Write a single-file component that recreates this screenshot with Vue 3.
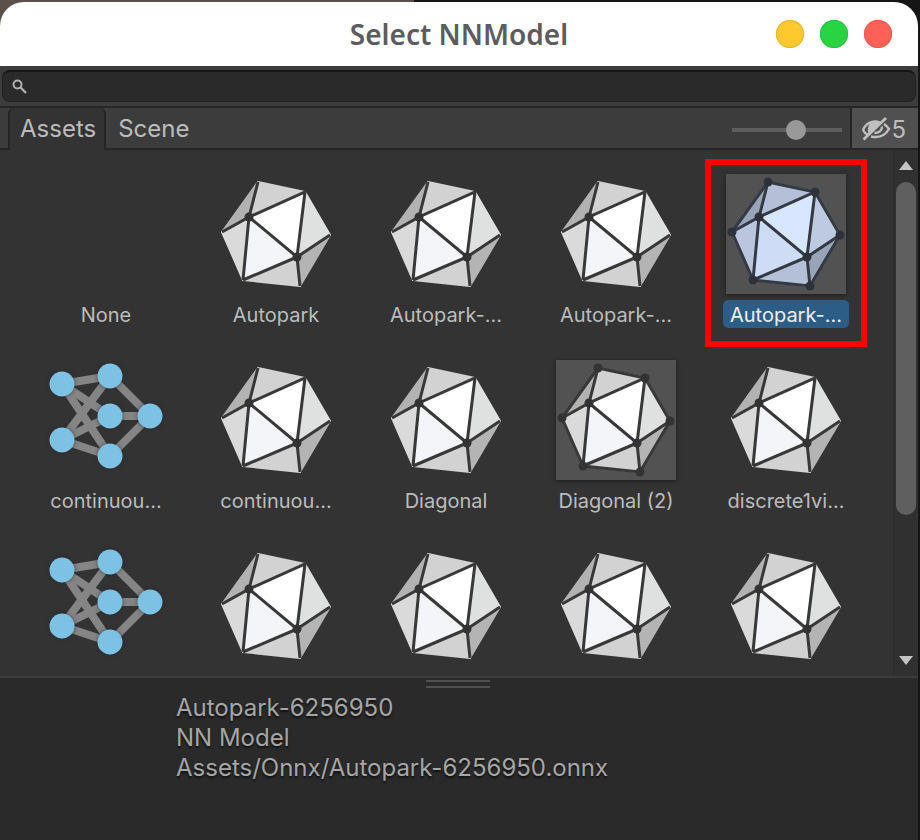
<script setup>
import { ref } from 'vue'

const search = ref('')
const zoom = ref(60)
const activeTab = ref('Assets')
const tabs = ['Assets', 'Scene']

const items = ref([
  { label: 'None', kind: 'none' },
  { label: 'Autopark', kind: 'mesh' },
  { label: 'Autopark-...', kind: 'mesh' },
  { label: 'Autopark-...', kind: 'mesh' },
  { label: 'Autopark-...', kind: 'mesh', tile: true, marked: true },
  { label: 'continuou...', kind: 'net' },
  { label: 'continuou...', kind: 'mesh' },
  { label: 'Diagonal', kind: 'mesh' },
  { label: 'Diagonal (2)', kind: 'mesh', tile: true },
  { label: 'discrete1vi...', kind: 'mesh' },
  { label: '', kind: 'net' },
  { label: '', kind: 'mesh' },
  { label: '', kind: 'mesh' },
  { label: '', kind: 'mesh' },
  { label: '', kind: 'mesh' }
])
const selected = ref(4)

// Icosahedron faces: points, neutral fill, selected fill
const faces = [
  ['42,8 89,18 33,43', '#d2d2d2', '#b3c0d8'],
  ['42,8 33,43 6,58', '#b2b2b2', '#99a4b8'],
  ['33,43 6,58 27,106', '#dadada', '#b9c6de'],
  ['33,43 89,18 81,83', '#ffffff', '#d9e6ff'],
  ['33,43 81,83 27,106', '#f4f5f8', '#cfdcf6'],
  ['89,18 114,61 81,83', '#dfe1e0', '#bdcae2'],
  ['81,83 114,61 84,112', '#b4b4b4', '#99a4b8'],
  ['81,83 84,112 27,106', '#d2d2d2', '#b3c0d8']
]
const outline = '42,8 89,18 114,61 84,112 27,106 6,58'
const innerEdges = 'M42 8 L33 43 L6 58 M27 106 L33 43 L89 18 L81 83 L114 61 M84 112 L81 83 L27 106 M33 43 L81 83'
const vertices = [[42, 8], [89, 18], [33, 43], [6, 58], [27, 106], [84, 112], [81, 83], [114, 61]]
const innerVertices = [[33, 43], [81, 83]]

const nodes = [[16, 24], [64, 16], [64, 56], [104, 56], [16, 80], [64, 96]]
const links = [[0, 5], [4, 1], [0, 1], [0, 2], [4, 2], [4, 5], [1, 3], [2, 3], [5, 3]]

function faceColor(face, i) {
  return selected.value === i ? face[2] : face[1]
}
</script>

<template>
  <div class="desktop">
    <main class="window">
      <header class="titlebar">
        <h1>Select NNModel</h1>
        <div class="controls">
          <button class="dot yellow" aria-label="Minimize"></button>
          <button class="dot green" aria-label="Maximize"></button>
          <button class="dot red" aria-label="Close"></button>
        </div>
      </header>

      <div class="searchbar">
        <label class="search">
          <svg viewBox="0 0 16 16" width="16" height="16" fill="none" stroke="#b0b0b0" aria-hidden="true">
            <circle cx="5.500" cy="5.500" r="4" stroke-width="2" />
            <path d="M8.500 8.500 L14 14" stroke-width="2.400" />
          </svg>
          <input v-model="search" type="text" aria-label="Search" />
        </label>
      </div>

      <nav class="toolbar">
        <button
          v-for="t in tabs"
          :key="t"
          class="tab"
          :class="{ active: activeTab === t }"
          @click="activeTab = t"
        >{{ t }}</button>
        <input v-model="zoom" class="slider" type="range" min="0" max="100" aria-label="Icon size" />
        <button class="hidden-count" aria-label="Hidden packages">
          <svg viewBox="0 0 30 26" width="30" height="26" fill="none" stroke="#c0c0c0" stroke-width="2.400" aria-hidden="true">
            <path d="M2 14 C6 5 14 4.500 19 6.500 M2 14 C3.500 17 4.500 18 7 19 M23 8 C26 10 27 11.500 28 13 C24 20 17 22 10 20.500" />
            <path d="M19.500 6 L8 18.500 C5.500 14 7 6 13 5.500 Z" fill="#c0c0c0" stroke="none" />
            <path d="M21 10.500 C21.500 14 18 17 13.500 17" />
            <path d="M2.500 23.500 L25 2" stroke-width="2.800" />
          </svg>
          <span>5</span>
        </button>
      </nav>

      <section class="browser">
        <div class="grid">
          <button
            v-for="(item, i) in items"
            :key="i"
            class="item"
            :class="{ selected: selected === i }"
            @click="selected = i"
          >
            <span class="thumb" :class="{ tile: item.tile }">
              <svg v-if="item.kind === 'mesh'" viewBox="0 0 120 120" class="mesh" aria-hidden="true">
                <polygon
                  v-for="f in faces"
                  :key="f[0]"
                  :points="f[0]"
                  :fill="faceColor(f, i)"
                  :stroke="faceColor(f, i)"
                  stroke-width="2"
                  stroke-linejoin="round"
                />
                <path :d="innerEdges" class="edge" />
                <polygon v-if="item.tile" :points="outline" class="edge" />
                <circle
                  v-for="v in item.tile ? vertices : innerVertices"
                  :key="v[0]"
                  :cx="v[0]"
                  :cy="v[1]"
                  r="4.500"
                />
              </svg>
              <svg v-else-if="item.kind === 'net'" viewBox="0 0 120 120" class="net" aria-hidden="true">
                <line
                  v-for="(l, n) in links"
                  :key="'l' + n"
                  :x1="nodes[l[0]][0]"
                  :y1="nodes[l[0]][1]"
                  :x2="nodes[l[1]][0]"
                  :y2="nodes[l[1]][1]"
                />
                <circle v-for="(n, k) in nodes" :key="'n' + k" :cx="n[0]" :cy="n[1]" r="12.500" />
              </svg>
            </span>
            <span class="label">{{ item.label }}</span>
            <span v-if="item.marked" class="marker"></span>
          </button>
        </div>
        <div class="scrollbar">
          <button class="arrow" aria-label="Scroll up">
            <svg viewBox="0 0 16 10" width="16" height="10"><path d="M8 0 L15 9 H1 Z" fill="#c4c4c4" /></svg>
          </button>
          <div class="track"><div class="handle"></div></div>
          <button class="arrow" aria-label="Scroll down">
            <svg viewBox="0 0 16 10" width="16" height="10"><path d="M8 10 L15 1 H1 Z" fill="#c4c4c4" /></svg>
          </button>
        </div>
      </section>

      <footer class="details">
        <div class="grip"></div>
        <p>Autopark-6256950</p>
        <p>NN Model</p>
        <p>Assets/Onnx/Autopark-6256950.onnx</p>
      </footer>
    </main>
  </div>
</template>

<style>
body {
  background: #151515;
}
</style>

<style scoped>
.desktop {
  box-sizing: border-box;
  height: 100vh;
  padding: 2px 2px 0 0;
  background: linear-gradient(90deg, #5a514b 0 45%, #151515 45%);
  font-family: Inter, "Liberation Sans", sans-serif;
}
.window {
  display: flex;
  flex-direction: column;
  height: 100%;
  overflow: hidden;
  border-radius: 24px 24px 0 0;
  background: #3c3c3c;
  color: #bcbcbc;
}
button {
  margin: 0;
  padding: 0;
  border: 0;
  background: none;
  color: inherit;
  font: inherit;
}
.titlebar {
  display: grid;
  grid-template-columns: 1fr auto 1fr;
  align-items: center;
  height: 64px;
  flex: none;
  background: #fff;
}
h1 {
  grid-column: 2;
  margin: 0;
  color: #5c5c60;
  font: 600 28px/64px "Noto Sans", "Open Sans", sans-serif;
}
.controls {
  display: flex;
  justify-content: flex-end;
  gap: 16px;
  padding-right: 26px;
}
.dot {
  width: 28px;
  height: 28px;
  border-radius: 50%;
}
.yellow { background: #fdc92f; box-shadow: inset 0 0 0 1px #e3b52f; }
.green { background: #28d441; box-shadow: inset 0 0 0 1px #27c23d; }
.red { background: #ff6157; box-shadow: inset 0 0 0 1px #ec5b52; }
.searchbar {
  flex: none;
  padding: 4px 2px;
}
.search {
  display: flex;
  align-items: center;
  gap: 8px;
  height: 29px;
  padding: 0 9px;
  border: 1px solid #212121;
  border-top: 2px solid #151515;
  border-radius: 8px;
  background: #2a2a2a;
}
.search input {
  flex: 1;
  border: 0;
  outline: 0;
  background: none;
  color: #c4c4c4;
  font: 20px Inter, sans-serif;
}
.toolbar {
  display: flex;
  flex: none;
  height: 40px;
  padding-left: 8px;
  border-top: 2px solid #252525;
  border-bottom: 2px solid #252525;
}
.tab {
  padding: 2px 12px 0;
  font-size: 24px;
  line-height: 36px;
}
.tab.active {
  margin-bottom: -2px;
  padding: 2px 8px 2px 10px;
  border: 2px solid #252525;
  border-width: 0 2px;
  border-radius: 6px 6px 0 0;
  background: #333;
}
.slider {
  appearance: none;
  width: 110px;
  height: 22px;
  margin: 11px 8px 0 auto;
  background: linear-gradient(#5e5e5e, #5e5e5e) center / 100% 4px no-repeat;
}
.slider::-webkit-slider-thumb {
  appearance: none;
  width: 20px;
  height: 20px;
  border-radius: 50%;
  background: #999;
}
.hidden-count {
  display: flex;
  align-items: center;
  padding: 2px 12px 0 9px;
  border-left: 2px solid #252525;
  background: #505050;
  font-size: 24px;
}
.browser {
  display: flex;
  flex: 1;
  min-height: 0;
  overflow: hidden;
  background: #333;
}
.grid {
  display: grid;
  flex: 1;
  grid-template-columns: repeat(5, 1fr);
  grid-auto-rows: 154px;
  row-gap: 32px;
  padding: 24px 22px 0 21px;
}
.item {
  position: relative;
  display: flex;
  flex-direction: column;
  align-items: center;
  gap: 6px;
}
.thumb {
  width: 120px;
  height: 120px;
}
.thumb svg {
  display: block;
  width: 100%;
  height: 100%;
}
.tile {
  background: #525252;
  box-shadow: 0 1px 4px #1c1c1c;
}
.mesh {
  fill: #333;
}
.mesh .edge {
  fill: none;
  stroke: #383838;
  stroke-width: 3;
}
.selected .mesh {
  fill: #2c313a;
}
.selected .mesh .edge {
  stroke: #343a44;
}
.net line {
  stroke: #858585;
  stroke-width: 8;
}
.net circle {
  fill: #7dc1e4;
  filter: drop-shadow(0 0 2px #222a);
}
.label {
  height: 28px;
  padding: 0 7px;
  border-radius: 5px;
  font-size: 20px;
  line-height: 30px;
  white-space: nowrap;
}
.selected .label {
  background: #2c5d87;
  color: #f0f0f0;
}
.marker {
  position: absolute;
  inset: -15px 4px -19px 4px;
  border: 6px solid #f00;
}
.scrollbar {
  display: flex;
  flex-direction: column;
  width: 24px;
  border-left: 1px solid #2b2b2b;
  background: #303030;
}
.arrow {
  display: flex;
  align-items: center;
  justify-content: center;
  height: 32px;
}
.track {
  flex: 1;
}
.handle {
  height: 72%;
  margin: 0 2px;
  border-radius: 10px;
  background: #5f5f5f;
}
.details {
  flex: none;
  height: 162px;
  padding-left: 176px;
  border-top: 2px solid #3c3c3c;
  background: #2a2a2a;
  color: #a6a6a6;
}
.grip {
  width: 64px;
  height: 4px;
  margin: 2px auto 5px 250px;
  border: 2px solid #505050;
  border-width: 2px 0;
}
.details p {
  margin: 0;
  font-size: 24px;
  line-height: 30px;
  text-shadow: 0 2px 2px #111;
}
</style>
